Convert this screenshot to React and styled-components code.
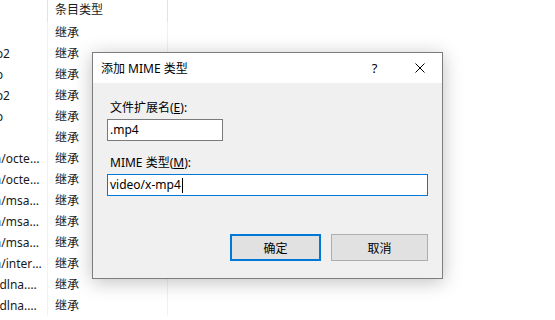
import React from 'react';
import styled, { createGlobalStyle } from 'styled-components';

const GlobalStyle = createGlobalStyle`
  html, body {
    margin: 0;
    padding: 0;
    background: #fff;
    overflow: hidden;
  }
  body {
    font-family: "Noto Sans", "Noto Sans CJK SC", sans-serif;
    font-size: 12px;
    color: #000;
  }
`;

const Screen = styled.div`
  position: relative;
  width: 555px;
  height: 320px;
  overflow: hidden;
  background: #fff;
`;

// list is scrolled horizontally, so the first column starts off screen
const List = styled.div`
  display: flex;
  flex-direction: column;
  margin-left: -68px;
`;

const Row = styled.div`
  display: grid;
  grid-template-columns: 116px 120px 1fr;
  height: ${p => (p.$header ? 22 : 21)}px;
`;

const Cell = styled.div`
  box-sizing: border-box;
  padding: 0 4px 0 7px;
  line-height: ${p => (p.$header ? 20 : 21)}px;
  white-space: nowrap;
  overflow: hidden;
  text-overflow: ellipsis;
  border-right: 1px solid ${p => (p.$header ? '#e3e3e3' : '#edf2fa')};
  color: #1a1a1a;
`;

const Dialog = styled.div`
  position: absolute;
  left: 92px;
  top: 52px;
  width: 351px;
  height: 227px;
  box-sizing: border-box;
  border: 1px solid #7d7d7d;
  background: #f0f0f0;
  box-shadow: 0 3px 18px rgba(0, 0, 0, 0.25);
  display: flex;
  flex-direction: column;
`;

const TitleBar = styled.div`
  height: 30px;
  background: #fff;
  display: flex;
  align-items: center;
  padding-left: 8px;
`;

const Title = styled.div`
  flex: 1;
  color: #000;
`;

const CaptionButton = styled.div`
  width: 45px;
  height: 30px;
  display: flex;
  align-items: center;
  justify-content: center;
  color: #000;
  font-size: 13px;
`;

const Body = styled.div`
  flex: 1;
  display: flex;
  flex-direction: column;
  padding: 16px 14px 17px 14px;
`;

const Label = styled.div`
  padding-left: 3px;
  line-height: 17px;
  margin-bottom: 3px;
  margin-top: ${p => p.$top || 0}px;
`;

const Input = styled.div`
  box-sizing: border-box;
  width: ${p => p.$width}px;
  height: 22px;
  background: #fff;
  border: 1px solid ${p => (p.$focus ? '#0078d7' : '#7a7a7a')};
  padding-left: 2px;
  display: flex;
  align-items: center;
  line-height: 20px;
`;

const Caret = styled.span`
  display: inline-block;
  width: 1px;
  height: 15px;
  background: #000;
  margin-left: 1px;
`;

const Buttons = styled.div`
  margin-top: auto;
  display: flex;
  justify-content: flex-end;
  gap: 10px;
`;

const Button = styled.div`
  box-sizing: border-box;
  width: ${p => p.$width}px;
  height: 27px;
  background: #e1e1e1;
  border: ${p => (p.$default ? '2px solid #0078d7' : '1px solid #adadad')};
  display: flex;
  align-items: center;
  justify-content: center;
`;

const rows = [
  'text/h323',
  'video/3gpp2',
  'video/3gpp',
  'video/3gpp2',
  'video/3gpp',
  'audio/aac',
  'application/octet-stream',
  'application/octet-stream',
  'application/msaccess',
  'application/msaccess',
  'application/msaccess',
  'application/internet-property-stream',
  'audio/vnd.dlna.adts',
  'audio/vnd.dlna.adts',
];

export default function App() {
  return (
    <Screen>
      <GlobalStyle />
      <List>
        <Row $header>
          <Cell $header>MIME 类型</Cell>
          <Cell $header>条目类型</Cell>
          <div />
        </Row>
        {rows.map((r, i) => (
          <Row key={i}>
            <Cell>{r}</Cell>
            <Cell>继承</Cell>
            <div />
          </Row>
        ))}
      </List>

      <Dialog>
        <TitleBar>
          <Title>添加 MIME 类型</Title>
          <CaptionButton>?</CaptionButton>
          <CaptionButton>
            <svg width="10" height="10" viewBox="0 0 10 10">
              <path d="M0.5 0.5 L9.5 9.5 M9.5 0.5 L0.5 9.5" stroke="#000" strokeWidth="1" fill="none" />
            </svg>
          </CaptionButton>
        </TitleBar>
        <Body>
          <Label>文件扩展名(<u>E</u>):</Label>
          <Input $width={116}>.mp4</Input>
          <Label $top={13}>MIME 类型(<u>M</u>):</Label>
          <Input $width={321} $focus>
            video/x-mp4<Caret />
          </Input>
          <Buttons>
            <Button $width={91} $default>确定</Button>
            <Button $width={97}>取消</Button>
          </Buttons>
        </Body>
      </Dialog>
    </Screen>
  );
}
